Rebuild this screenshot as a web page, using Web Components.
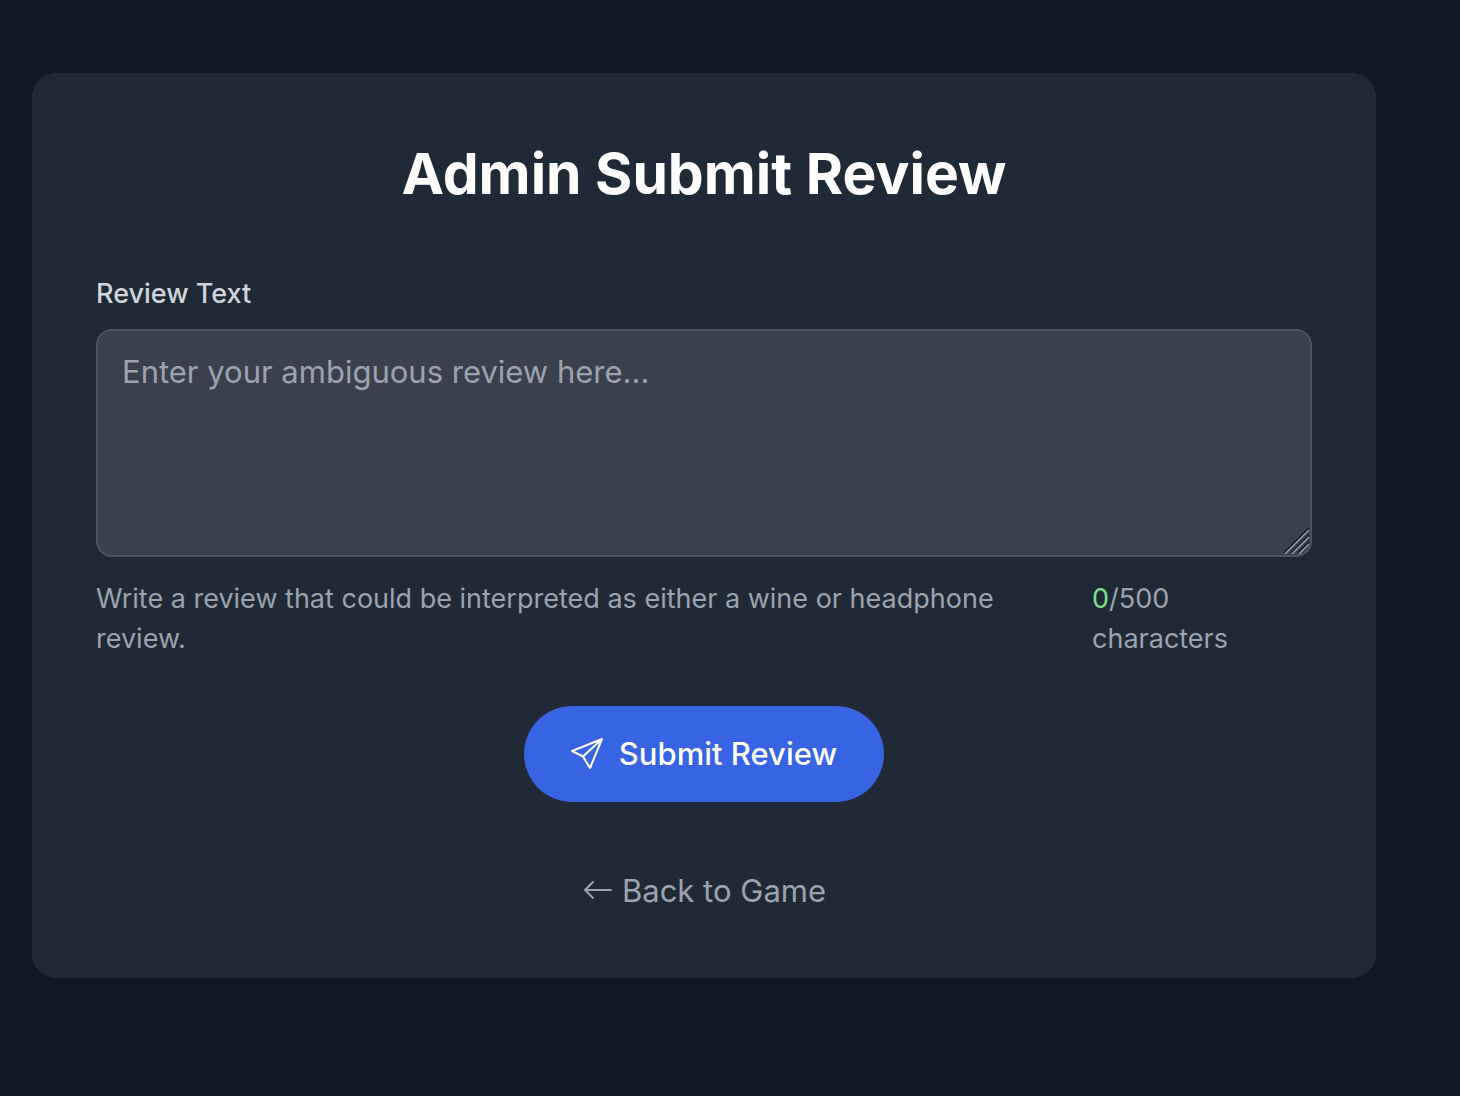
<!DOCTYPE html>
<html lang="en">
<head>
<meta charset="utf-8">
<meta name="viewport" content="width=device-width, initial-scale=1">
<title>Admin Submit Review</title>
<style>
  body {
    margin: 0;
    min-height: 100vh;
    background: #111824;
    color: #9ca3af;
    font-family: Inter, "Liberation Sans", sans-serif;
  }
</style>
</head>
<body>
<review-card>
  <h1 slot="title">Admin Submit Review</h1>
  <review-field label="Review Text" placeholder="Enter your ambiguous review here..." max="500">Write a review that could be interpreted as either a wine or headphone review.</review-field>
  <submit-button>Submit Review</submit-button>
  <back-link href="#game">Back to Game</back-link>
</review-card>
<script>
  class ReviewCard extends HTMLElement {
    constructor() {
      super();
      this.attachShadow({ mode: "open" }).innerHTML = `
        <style>
          :host { display: block; padding: 73px 32px; }
          main {
            box-sizing: border-box;
            max-width: 1344px;
            padding: 65px 64px 63px;
            border-radius: 24px;
            background: #202a36;
          }
          ::slotted(h1) {
            margin: 0 0 64px;
            color: #fff;
            font-size: 57px;
            line-height: 72px;
            font-weight: 700;
            text-align: center;
          }
        </style>
        <main><slot name="title"></slot><slot></slot></main>`;
    }
  }

  class ReviewField extends HTMLElement {
    constructor() {
      super();
      this.attachShadow({ mode: "open" }).innerHTML = `
        <style>
          :host { display: block; font-size: 27px; line-height: 40px; }
          label { display: block; margin-bottom: 15px; color: #d1d5db; font-weight: 500; }
          .box { display: flex; position: relative; }
          textarea {
            box-sizing: border-box;
            width: 100%;
            height: 228px;
            margin: 0;
            padding: 17px 24px 15px;
            border: 2px solid #4b5563;
            border-radius: 16px;
            outline: none;
            background: #3b404f;
            color: #fff;
            font: inherit;
            font-size: 31px;
            line-height: 48px;
            resize: vertical;
          }
          textarea::placeholder { color: #9ca3af; opacity: 1; }
          textarea::-webkit-resizer { background: transparent; }
          .grip { position: absolute; right: 2px; bottom: 2px; pointer-events: none; }
          .notes { display: flex; gap: 32px; margin-top: 22px; }
          .hint { flex: 1; }
          .count { box-sizing: border-box; width: 220px; padding-right: 48px; }
          .count b { color: #7de08f; font-weight: 400; }
        </style>
        <label for="text"></label>
        <div class="box">
          <textarea id="text" aria-describedby="hint"></textarea>
          <svg class="grip" width="26" height="28" viewBox="0 0 26 28" fill="none" aria-hidden="true">
            <path stroke="#1b2431" stroke-width="2.4" d="M0 26 25 1M7 26 25 8M14 26 25 15"/>
            <path stroke="#9ea3ad" stroke-width="1.4" d="M1 27 25 3M8 27 25 10M15 27 25 17"/>
          </svg>
        </div>
        <div class="notes">
          <div class="hint" id="hint"><slot></slot></div>
          <div class="count"><b>0</b>/<span></span> characters</div>
        </div>`;
    }
    connectedCallback() {
      const root = this.shadowRoot;
      const area = root.querySelector("textarea");
      root.querySelector("label").textContent = this.getAttribute("label");
      area.placeholder = this.getAttribute("placeholder");
      area.maxLength = Number(this.getAttribute("max"));
      root.querySelector("span").textContent = this.getAttribute("max");
      area.addEventListener("input", () => {
        root.querySelector("b").textContent = area.value.length;
      });
    }
  }

  class SubmitButton extends HTMLElement {
    constructor() {
      super();
      this.attachShadow({ mode: "open" }).innerHTML = `
        <style>
          :host { display: flex; justify-content: center; margin-top: 47px; }
          button {
            display: flex;
            align-items: center;
            gap: 16px;
            padding: 24px 47px;
            border: 0;
            border-radius: 48px;
            background: #3664e3;
            color: #fff;
            font: inherit;
            font-size: 31px;
            line-height: 48px;
            font-weight: 500;
            cursor: pointer;
          }
        </style>
        <button type="button">
          <svg width="32" height="32" viewBox="0 0 32 32" fill="none" stroke="#fff" stroke-width="2" stroke-linejoin="round" aria-hidden="true">
            <path d="M31 1 1 13 12 18.500 19 30ZM31 1 12 18.500"/>
          </svg>
          <slot></slot>
        </button>`;
    }
  }

  class BackLink extends HTMLElement {
    constructor() {
      super();
      this.attachShadow({ mode: "open" }).innerHTML = `
        <style>
          :host { display: flex; justify-content: center; margin-top: 65px; }
          a {
            display: flex;
            align-items: center;
            gap: 8px;
            color: #9ca3af;
            font-size: 31px;
            line-height: 48px;
            text-decoration: none;
          }
        </style>
        <a><svg width="32" height="32" viewBox="0 0 32 32" fill="none" stroke="currentColor" stroke-width="2" stroke-linecap="round" stroke-linejoin="round" aria-hidden="true">
          <path d="M29 15H3M11 7 3 15l8 8"/>
        </svg><slot></slot></a>`;
    }
    connectedCallback() {
      this.shadowRoot.querySelector("a").href = this.getAttribute("href");
    }
  }

  customElements.define("review-card", ReviewCard);
  customElements.define("review-field", ReviewField);
  customElements.define("submit-button", SubmitButton);
  customElements.define("back-link", BackLink);
</script>
</body>
</html>
